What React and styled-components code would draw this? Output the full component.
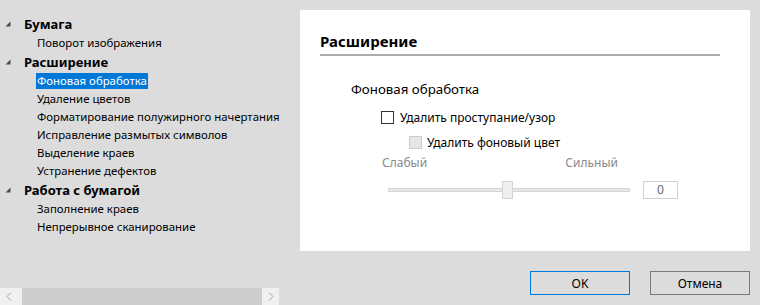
import React from 'react'
import styled, { createGlobalStyle } from 'styled-components'

const GlobalStyle = createGlobalStyle`
html, body {
    margin: 0;
    padding: 0;
}
body {
    width: 760px;
    height: 305px;
    overflow: hidden;
    background: #dcdcdc;
    font-family: "Noto Sans", "Open Sans", sans-serif;
    color: #000;
}
`

const Window = styled.div`
display: flex;
width: 760px;
height: 305px;
`

const Sidebar = styled.div`
display: flex;
flex-direction: column;
width: 280px;
`

const Tree = styled.ul`
flex: 1;
list-style: none;
margin: 0;
padding: 14px 0 0 0;
`

const Row = styled.li`
display: flex;
align-items: center;
height: ${p => (p.$heading ? '20px' : '18px')};
padding-left: ${p => (p.$heading ? '5px' : '36px')};
font-size: ${p => (p.$heading ? '13px' : '11.4px')};
font-weight: ${p => (p.$heading ? 700 : 400)};
white-space: nowrap;
`

const Arrow = styled.span`
display: flex;
width: 18px;
`

const Label = styled.span`
padding: 0 1px;
line-height: 16px;
background: ${p => (p.$selected ? '#0078d7' : 'transparent')};
color: ${p => (p.$selected ? '#fff' : '#000')};
`

const ScrollBar = styled.div`
display: flex;
height: 17px;
width: 279px;
background: #f0f0f0;
`

const ScrollButton = styled.div`
display: flex;
align-items: center;
justify-content: center;
width: 17px;
`

const ScrollTrack = styled.div`
flex: 1;
display: flex;
padding-left: 5px;
`

const Thumb = styled.div`
flex: 1;
background: #cdcdcd;
`

const Main = styled.div`
flex: 1;
display: flex;
flex-direction: column;
`

const Panel = styled.div`
margin: 10px 10px 0 20px;
height: 241px;
background: #fff;
padding: 21px 30px 0 20px;
box-sizing: border-box;
`

const Title = styled.h2`
margin: 0;
font-size: 15px;
font-weight: 700;
line-height: 20px;
padding-bottom: 3px;
border-bottom: 2px solid #ababab;
`

const Section = styled.div`
padding: 23px 0 0 31px;
`

const SectionTitle = styled.div`
font-size: 13.3px;
line-height: 20px;
`

const CheckRow = styled.label`
display: flex;
align-items: center;
gap: ${p => p.$gap}px;
height: 20px;
margin-left: ${p => p.$indent}px;
margin-top: ${p => p.$top}px;
font-size: 12px;
`

const Box = styled.span`
width: 11px;
height: 11px;
border: 1px solid ${p => (p.$disabled ? '#cccccc' : '#333333')};
background: ${p => (p.$disabled ? '#e6e6e6' : '#fff')};
`

const Scale = styled.div`
display: flex;
justify-content: space-between;
width: 236px;
margin: 3px 0 0 31px;
font-size: 12px;
line-height: 16px;
color: #8a8a8a;
`

const SliderRow = styled.div`
display: flex;
align-items: center;
gap: 13px;
margin: 10px 0 0 37px;
height: 18px;
`

const Track = styled.div`
position: relative;
width: 240px;
height: 2px;
background: #e7e7e7;
border: 1px solid #d6d6d6;
`

const Knob = styled.div`
position: absolute;
left: 113px;
top: -8px;
width: 9px;
height: 16px;
background: #efefef;
border: 1px solid #d4d4d4;
`

const ValueBox = styled.div`
width: 33px;
height: 16px;
border: 1px solid #d0d0d0;
font-size: 12px;
line-height: 16px;
text-align: center;
color: #5f6b7a;
`

const Buttons = styled.div`
display: flex;
justify-content: flex-end;
gap: 20px;
margin: 20px 10px 0 0;
`

const Button = styled.button`
width: 100px;
height: 24px;
box-sizing: border-box;
background: #dcdcdc;
border: 1px solid ${p => (p.$primary ? '#0078d7' : '#7a7a7a')};
font-family: "Noto Sans", "Open Sans", sans-serif;
font-size: 12px;
color: #000;
padding: 0;
`

const Expanded = () => (
    <svg width="6" height="6" viewBox="0 0 6 6">
        <polygon points="5.5,0.5 5.5,5.5 0.5,5.5" fill="#4a4a4a" />
    </svg>
)

const Chevron = ({ right }) => (
    <svg width="6" height="9" viewBox="0 0 6 9">
        <polyline
            points={right ? '1,0.5 5,4.5 1,8.5' : '5,0.5 1,4.5 5,8.5'}
            fill="none"
            stroke="#a3a3a3"
            strokeWidth="1"
        />
    </svg>
)

const tree = [
    { title: 'Бумага', items: ['Поворот изображения'] },
    {
        title: 'Расширение',
        items: [
            'Фоновая обработка',
            'Удаление цветов',
            'Форматирование полужирного начертания',
            'Исправление размытых символов',
            'Выделение краев',
            'Устранение дефектов',
        ],
    },
    { title: 'Работа с бумагой', items: ['Заполнение краев', 'Непрерывное сканирование'] },
]

export default function App() {
    return (
        <Window>
            <GlobalStyle />
            <Sidebar>
                <Tree>
                    {tree.map(group => (
                        <React.Fragment key={group.title}>
                            <Row $heading>
                                <Arrow><Expanded /></Arrow>
                                <Label>{group.title}</Label>
                            </Row>
                            {group.items.map(item => (
                                <Row key={item}>
                                    <Label $selected={item === 'Фоновая обработка'}>{item}</Label>
                                </Row>
                            ))}
                        </React.Fragment>
                    ))}
                </Tree>
                <ScrollBar>
                    <ScrollButton><Chevron /></ScrollButton>
                    <ScrollTrack><Thumb /></ScrollTrack>
                    <ScrollButton><Chevron right /></ScrollButton>
                </ScrollBar>
            </Sidebar>
            <Main>
                <Panel>
                    <Title>Расширение</Title>
                    <Section>
                        <SectionTitle>Фоновая обработка</SectionTitle>
                        <CheckRow $indent={30} $top={8} $gap={6}>
                            <Box />
                            Удалить проступание/узор
                        </CheckRow>
                        <CheckRow $indent={58} $top={5} $gap={5}>
                            <Box $disabled />
                            Удалить фоновый цвет
                        </CheckRow>
                        <Scale>
                            <span>Слабый</span>
                            <span>Сильный</span>
                        </Scale>
                        <SliderRow>
                            <Track><Knob /></Track>
                            <ValueBox>0</ValueBox>
                        </SliderRow>
                    </Section>
                </Panel>
                <Buttons>
                    <Button $primary>OK</Button>
                    <Button>Отмена</Button>
                </Buttons>
            </Main>
        </Window>
    )
}
